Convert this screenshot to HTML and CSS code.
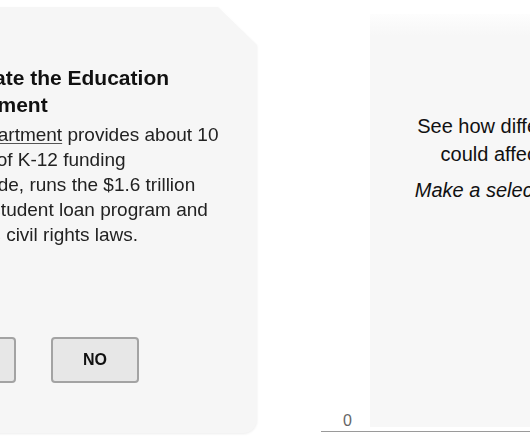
FILE: index.html
```html
<!DOCTYPE html>
<html lang="en">
<head>
  <meta charset="UTF-8">
  <meta name="viewport" content="width=device-width, initial-scale=1.0">
  <title>Education Department Quiz</title>
  <link rel="stylesheet" href="styles.css">
</head>
<body>
  <div class="page">
    <div class="card-wrap">
      <div class="card">
        <h2 class="question">Eliminate the Education<br>Department</h2>
        <p class="blurb">The <a href="#">department</a> provides about 10<br>percent of K-12 funding<br>nationwide, runs the $1.6 trillion<br>federal student loan program and<br>enforces civil rights laws.</p>
        <div class="choices">
          <button class="choice">YES</button>
          <button class="choice">NO</button>
        </div>
      </div>
    </div>

    <div class="chart">
      <div class="plot-row">
        <div class="y-label"><span>0</span></div>
        <div class="plot">
          <p class="prompt">See how different policies<br>could affect schools.</p>
          <p class="hint">Make a selection to begin.</p>
        </div>
      </div>
      <div class="axis"></div>
    </div>
  </div>
</body>
</html>
```

FILE: styles.css
```css
body {
  margin: 0;
  padding: 0;
  background: #fff;
  color: #111;
  font-family: "Liberation Sans", Arial, sans-serif;
  overflow: hidden;
}
.page {
  display: flex;
  align-items: flex-start;
  width: 530px;
  height: 442px;
  overflow: hidden;
}
.card-wrap {
  flex: none;
  margin-left: -100px;
  margin-top: 7px;
  filter: drop-shadow(0 1px 1px rgba(0, 0, 0, 0.07));
}
.card {
  width: 357px;
  height: 426px;
  box-sizing: border-box;
  padding: 57px 0 0 28px;
  background: #f6f6f6;
  border-radius: 0 0 14px 0;
  clip-path: polygon(0 0, 318px 0, 100% 38px, 100% 100%, 0 100%);
}
.question {
  margin: 0 0 4px;
  padding-left: 3px;
  font-size: 21px;
  line-height: 27px;
  font-weight: bold;
  color: #111;
}
.blurb {
  margin: 0;
  font-size: 19px;
  line-height: 25px;
  color: #222;
}
.blurb a {
  color: #222;
  text-decoration: underline;
  text-decoration-color: #555;
  text-underline-offset: 2px;
}
.choices {
  display: flex;
  gap: 35px;
  margin-top: 90px;
}
.choice {
  width: 88px;
  height: 46px;
  background: #e7e7e7;
  border: 2px solid #a3a3a3;
  border-radius: 4px;
  font-family: "Liberation Sans", Arial, sans-serif;
  font-size: 16px;
  font-weight: bold;
  color: #111;
  cursor: pointer;
}
.chart {
  flex: none;
  margin-left: 64px;
  margin-top: 14px;
  width: 371px;
}
.plot-row {
  display: flex;
  height: 413px;
}
.y-label {
  width: 49px;
  display: flex;
  align-items: flex-end;
  justify-content: center;
  padding-left: 4px;
  box-sizing: border-box;
  font-size: 16px;
  line-height: 16px;
  color: #666;
}
.y-label span {
  margin-bottom: -2px;
}
.plot {
  flex: 1;
  box-sizing: border-box;
  padding-top: 98px;
  background: linear-gradient(#fdfdfd, #f7f7f7 22px);
  text-align: center;
  font-size: 20px;
  line-height: 28px;
  color: #111;
}
.prompt {
  margin: 0;
}
.hint {
  margin: 8px 0 0;
  font-style: italic;
}
.axis {
  margin-top: 4px;
  height: 1px;
  background: #9a9a9a;
}
```
